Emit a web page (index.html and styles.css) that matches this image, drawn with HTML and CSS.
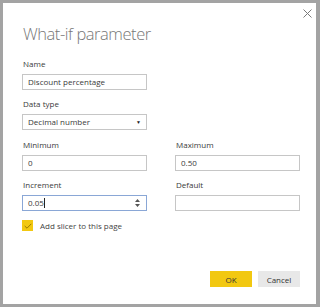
FILE: index.html
```html
<!DOCTYPE html>
<html>
<head>
<meta charset="utf-8">
<link rel="stylesheet" href="styles.css">
</head>
<body>
<div class="dialog">
  <button class="close" aria-label="Close">
    <svg width="9" height="9" viewBox="0 0 9 9"><path d="M0.5 0.5L8.5 8.5M8.5 0.5L0.5 8.5" stroke="#7a7a7a" stroke-width="1" fill="none"/></svg>
  </button>
  <h1 class="title">What-if parameter</h1>

  <div class="field">
    <label class="label">Name</label>
    <div class="input">Discount percentage</div>
  </div>

  <div class="field">
    <label class="label">Data type</label>
    <div class="input select">Decimal number<span class="arrow">▼</span></div>
  </div>

  <div class="grid">
    <div class="field">
      <label class="label">Minimum</label>
      <div class="input">0</div>
    </div>
    <div class="field">
      <label class="label">Maximum</label>
      <div class="input">0.50</div>
    </div>
    <div class="field">
      <label class="label">Increment</label>
      <div class="input focused">0.05<span class="caret"></span>
        <span class="spin">
          <svg width="5" height="8" viewBox="0 0 5 8"><path d="M2.5 0L5 3H0Z M2.5 8L5 5H0Z" fill="#555"/></svg>
        </span>
      </div>
    </div>
    <div class="field">
      <label class="label">Default</label>
      <div class="input"></div>
    </div>
  </div>

  <div class="check-row">
    <span class="checkbox">
      <svg width="8" height="6" viewBox="0 0 8 6"><path d="M0.7 3L3 5.2L7.3 0.8" stroke="#9a7b00" stroke-width="1" fill="none"/></svg>
    </span>
    <span class="check-label">Add slicer to this page</span>
  </div>

  <div class="buttons">
    <button class="btn ok">OK</button>
    <button class="btn cancel">Cancel</button>
  </div>
</div>
</body>
</html>
```

FILE: styles.css
```css
html, body {
  margin: 0;
  padding: 0;
}
body {
  background: #a3a3a3;
  width: 320px;
  height: 307px;
  overflow: hidden;
  font-family: "Open Sans", "Noto Sans", sans-serif;
}
.dialog {
  position: relative;
  box-sizing: border-box;
  margin: 3px 4px 0 3px;
  width: 313px;
  height: 301px;
  background: #fff;
  padding: 21px 16px 0 19px;
  display: flex;
  flex-direction: column;
}
.close {
  position: absolute;
  top: 5px;
  right: 3px;
  width: 11px;
  height: 11px;
  padding: 1px;
  border: 0;
  background: none;
  display: flex;
  align-items: center;
  justify-content: center;
}
.title {
  margin: 0 0 0 1px;
  font-size: 16.5px;
  line-height: 20px;
  font-weight: 300;
  color: #777;
  letter-spacing: -0.45px;
}
.field {
  display: flex;
  flex-direction: column;
  width: 125px;
}
.title + .field {
  margin-top: 15px;
}
.field + .field {
  margin-top: 9px;
}
.label {
  font-size: 8px;
  line-height: 10px;
  color: #3a3a3a;
  margin: 0 0 5px 1px;
}
.input {
  position: relative;
  box-sizing: border-box;
  height: 16px;
  border: 1px solid #c6c6c6;
  font-size: 8px;
  line-height: 14px;
  padding: 0 5px;
  color: #3a3a3a;
  display: flex;
  align-items: center;
}
.select .arrow {
  margin-left: auto;
  font-size: 5px;
  color: #222;
}
.grid {
  margin-top: 10px;
  display: grid;
  grid-template-columns: 125px 125px;
  column-gap: 28px;
  row-gap: 9px;
}
.grid .field + .field {
  margin-top: 0;
}
.focused {
  border-color: #8aa7d6;
}
.caret {
  display: inline-block;
  width: 1px;
  height: 10px;
  background: #222;
  margin-left: 0;
}
.spin {
  margin-left: auto;
  display: flex;
  margin-right: 1px;
}
.check-row {
  margin-top: 9px;
  display: flex;
  align-items: center;
  gap: 7px;
}
.checkbox {
  width: 11px;
  height: 11px;
  background: #f2c811;
  display: flex;
  align-items: center;
  justify-content: center;
}
.check-label {
  font-size: 8px;
  line-height: 10px;
  color: #444;
}
.buttons {
  margin-top: auto;
  margin-bottom: 17px;
  display: flex;
  justify-content: flex-end;
  gap: 6px;
}
.btn {
  width: 42px;
  height: 16px;
  border: 0;
  padding: 0;
  font-family: inherit;
  font-size: 8px;
  color: #333;
}
.ok {
  background: #f2c811;
}
.cancel {
  background: #e8e8e8;
}
```
